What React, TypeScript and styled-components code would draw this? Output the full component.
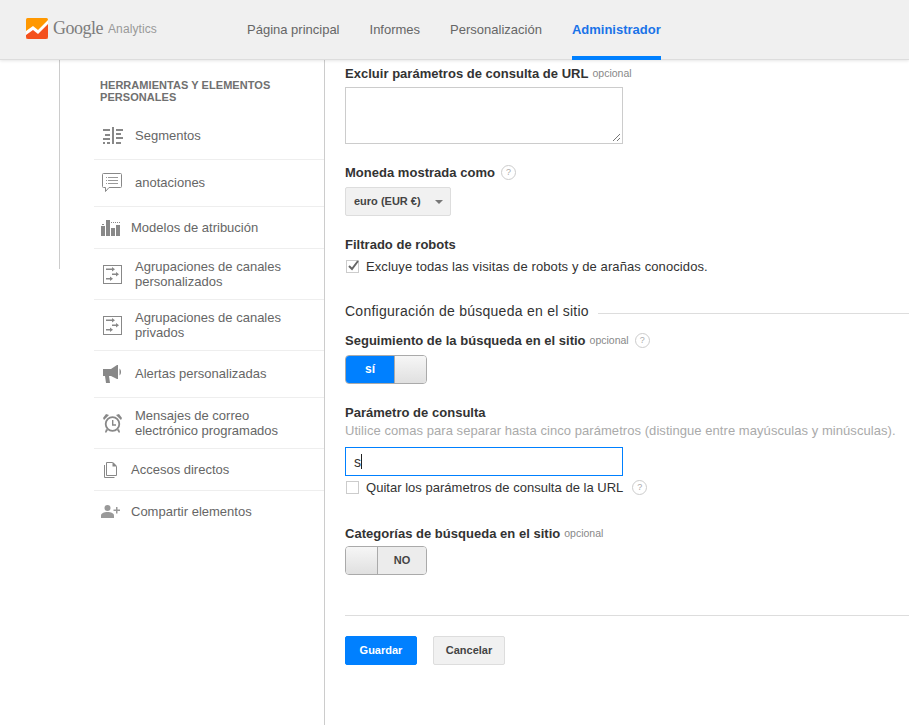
import React from 'react'
import styled, { createGlobalStyle } from 'styled-components'

const GlobalStyle = createGlobalStyle`
  html, body {
    margin: 0;
    padding: 0;
    background: #fff;
    overflow: hidden;
  }
  body {
    font-family: 'Liberation Sans', Arial, sans-serif;
    color: #333;
  }
`

const ICON_COLOR = '#888'

const SegmentsIcon = () => (
  <svg width="21" height="17" viewBox="0 0 21 17">
    <path d="M9 0h2v17H9z" fill={ICON_COLOR} />
    <path d="M0 2h7v2H0zM2 7h5v2H2zM0 11h7v2H0zM0 15h2v2H0zM4 15h3v2H4zM13 2h7v2h-7zM13 6h5v2h-5zM13 10h7v2h-7zM13 15h5v2h-5z" fill={ICON_COLOR} />
  </svg>
)

const NotesIcon = () => (
  <svg width="20" height="20" viewBox="0 0 20 20">
    <path d="M1.500.5h17a1 1 0 0 1 1 1v12a1 1 0 0 1-1 1H7l-3.500 4v-4h-2a1 1 0 0 1-1-1v-12a1 1 0 0 1 1-1z" fill="none" stroke={ICON_COLOR} />
    <path d="M4 4h1v1H4zM6 4h10v1H6zM4 7h1v1H4zM6 7h10v1H6zM4 10h1v1H4zM6 10h10v1H6z" fill="#999" />
  </svg>
)

const BarsIcon = () => (
  <svg width="19" height="16" viewBox="0 0 19 16">
    <path d="M0 6h4v10H0zM5 0h4v16H5zM10 8h4v8h-4zM15 5h4v11h-4z" fill={ICON_COLOR} />
    <path d="M1 4h2v1H1zM10 2h1v1h-1zM12 2h1v1h-1zM14 2h1v1h-1zM16 2h1v1h-1zM18 2h1v1h-1z" fill={ICON_COLOR} />
  </svg>
)

const ChannelsIcon = () => (
  <svg width="19" height="19" viewBox="0 0 19 19">
    <rect x=".5" y=".5" width="18" height="18" fill="none" stroke={ICON_COLOR} />
    <path d="M3 3.500h6V5H3zM9 2l3 2.250L9 6.500zM9 8.500h4V10H9zM13 7l3 2.250-3 2.250zM3 13h4v1.500H3zM7 11.500l3 2.250L7 16z" fill={ICON_COLOR} />
  </svg>
)

const MegaphoneIcon = () => (
  <svg width="19" height="18" viewBox="0 0 19 18">
    <path d="M0 4h8l6-4h1v14h-1l-6-3H6l1 7H3l-1-7H0z" fill={ICON_COLOR} />
    <path d="M16.500 3.500c2 1.500 2 5.500 0 7z" fill={ICON_COLOR} />
  </svg>
)

const ClockIcon = () => (
  <svg width="19" height="19" viewBox="0 0 19 19">
    <circle cx="9.500" cy="10" r="6.800" fill="none" stroke={ICON_COLOR} strokeWidth="1.800" />
    <path d="M9 6h1.400v4.300H13v1.400H9z" fill={ICON_COLOR} />
    <path d="M0 4l3-4 3 1-5 5zM19 4l-3-4-3 1 5 5zM3 15l2 1-2 3-1-1zM16 15l-2 1 2 3 1-1z" fill={ICON_COLOR} />
  </svg>
)

const PagesIcon = () => (
  <svg width="13" height="16" viewBox="0 0 13 16">
    <path d="M2.500.5h6l4 4v9h-10z" fill="none" stroke={ICON_COLOR} />
    <path d="M8.500.5h1l3 3v1h-4z" fill={ICON_COLOR} />
    <path d="M.5 3v12.500h10" fill="none" stroke={ICON_COLOR} />
  </svg>
)

const ShareIcon = () => (
  <svg width="19" height="13" viewBox="0 0 19 13">
    <circle cx="6.500" cy="3" r="3" fill="#999" />
    <path d="M0 13v-2.500C0 8.500 3 7 6.500 7S13 8.500 13 10.500V13z" fill="#999" />
    <path d="M15 2h1.500v2.500H19V6h-2.500v2.500H15V6h-2.500V4.500H15z" fill="#999" />
  </svg>
)

const LogoIcon = () => (
  <svg width="22" height="21" viewBox="0 0 22 21">
    <rect width="22" height="21" rx="1.500" fill="#ff9800" />
    <path d="M0 13l7-5 5 4 10-10v17a2 2 0 0 1-2 2H2a2 2 0 0 1-2-2z" fill="#fff" />
    <path d="M0 17l7-5 5 4 10-10v13a2 2 0 0 1-2 2H2a2 2 0 0 1-2-2z" fill="#f4511e" />
  </svg>
)

const Page = styled.div`
  width: 909px;
  height: 725px;
  display: flex;
  flex-direction: column;
  overflow: hidden;
  background: #fff;
`

const Header = styled.header`
  height: 59px;
  flex: none;
  display: flex;
  background: #f0f0f0;
  border-bottom: 1px solid #ddd;
  box-shadow: 0 1px 3px rgba(0, 0, 0, 0.1);
  position: relative;
  z-index: 1;
`

const Logo = styled.div`
  width: 247px;
  flex: none;
  display: flex;
  align-items: center;
  padding: 0 0 2px 26px;
  box-sizing: border-box;
`

const LogoGoogle = styled.span`
  margin-left: 5px;
  font-family: 'Liberation Serif', serif;
  font-size: 18px;
  letter-spacing: -0.5px;
  color: #7d7d7d;
`

const LogoProduct = styled.span`
  margin-left: 5px;
  font-size: 12px;
  letter-spacing: 0.1px;
  color: #999;
`

const Nav = styled.nav`
  display: flex;
  gap: 30px;
`

const NavItem = styled.a<{ $active?: boolean }>`
  height: 60px;
  box-sizing: border-box;
  padding-top: 21px;
  font-size: 13px;
  line-height: 18px;
  font-weight: ${(p) => (p.$active ? 'bold' : 'normal')};
  color: ${(p) => (p.$active ? '#1a73e8' : '#666')};
  border-bottom: 4px solid ${(p) => (p.$active ? '#0080ff' : 'transparent')};
`

const Body = styled.div`
  flex: 1;
  display: flex;
  min-height: 0;
`

const Rail = styled.div`
  width: 60px;
  height: 209px;
  flex: none;
  box-sizing: border-box;
  border-right: 1px solid #ccc;
`

const Sidebar = styled.aside`
  width: 265px;
  flex: none;
  box-sizing: border-box;
  padding: 19px 0 0 34px;
  border-right: 1px solid #ccc;
`

const SidebarTitle = styled.h3`
  margin: 0 0 9px 6px;
  font-size: 11px;
  line-height: 12px;
  font-weight: bold;
  letter-spacing: 0.05px;
  color: #707070;
  text-transform: uppercase;
`

const SideItem = styled.a<{ $height: number; $last?: boolean }>`
  height: ${(p) => p.$height}px;
  box-sizing: border-box;
  /* odd rows would round their text a pixel low */
  padding-bottom: ${(p) => (p.$height === 47 ? 1 : 0)}px;
  display: flex;
  align-items: center;
  border-bottom: 1px solid ${(p) => (p.$last ? 'transparent' : '#eee')};
  font-size: 13px;
  line-height: 15px;
  color: #666;
`

const SideIconSlot = styled.span<{ $width: number; $inset: number }>`
  width: ${(p) => p.$width}px;
  flex: none;
  display: flex;
  padding-left: ${(p) => p.$inset}px;
  box-sizing: border-box;
`

const Main = styled.main`
  flex: 1;
  min-width: 0;
  padding: 6px 0 0 20px;
`

const Field = styled.div<{ $mb: number }>`
  margin-bottom: ${(p) => p.$mb}px;
`

const Label = styled.div`
  display: flex;
  align-items: center;
  font-size: 13px;
  line-height: 15px;
  font-weight: bold;
  letter-spacing: 0.02px;
  color: #333;
`

const Optional = styled.span`
  margin-left: 4px;
  font-size: 10.500px;
  font-weight: normal;
  letter-spacing: 0;
  color: #888;
`

const Help = styled.span<{ $ml?: number }>`
  width: 13px;
  height: 13px;
  margin-left: ${(p) => p.$ml ?? 6}px;
  flex: none;
  display: inline-flex;
  align-items: center;
  justify-content: center;
  border: 1px solid #ccc;
  border-radius: 50%;
  font-size: 9px;
  font-weight: normal;
  color: #aaa;
`

const TextArea = styled.div`
  width: 278px;
  height: 57px;
  margin-top: 6px;
  box-sizing: border-box;
  border: 1px solid #ccc;
  position: relative;
`

const Grip = styled.svg`
  position: absolute;
  right: 1px;
  bottom: 1px;
`

const Select = styled.div`
  width: 106px;
  height: 29px;
  margin-top: 7px;
  box-sizing: border-box;
  padding: 0 0 2px 8px;
  display: flex;
  align-items: center;
  border: 1px solid #ddd;
  border-radius: 2px;
  background: #f1f1f1;
  font-size: 11px;
  font-weight: bold;
  color: #444;
`

const Caret = styled.span`
  margin: 3px 0 0 14px;
  border-style: solid;
  border-width: 4px 4px 0;
  border-color: #777 transparent transparent;
`

const CheckRow = styled.div<{ $mt: number; $spacing: number }>`
  margin-top: ${(p) => p.$mt}px;
  display: flex;
  align-items: center;
  font-size: 13px;
  line-height: 15px;
  letter-spacing: ${(p) => p.$spacing}px;
  color: #333;
`

const CheckBox = styled.span`
  width: 13px;
  height: 13px;
  margin: 0 7px 0 1px;
  flex: none;
  box-sizing: border-box;
  border: 1px solid #ccc;
  position: relative;
`

const CheckMark = styled.svg`
  position: absolute;
  left: -1px;
  top: -3px;
`

const SectionHead = styled.div`
  display: flex;
  align-items: center;
  gap: 9px;
  margin-bottom: 13px;
  font-size: 14px;
  line-height: 18px;
  letter-spacing: 0.26px;
  color: #333;
  &::after {
    content: '';
    flex: 1;
    height: 1px;
    margin-top: 4px;
    background: #ddd;
  }
`

const Toggle = styled.div<{ $mt: number }>`
  width: 82px;
  height: 29px;
  margin-top: ${(p) => p.$mt}px;
  display: flex;
  box-sizing: border-box;
  border: 1px solid #aaa;
  border-radius: 4px;
  overflow: hidden;
  font-size: 12px;
  font-weight: bold;
`

const ToggleOn = styled.span`
  width: 50px;
  padding-bottom: 2px;
  box-sizing: border-box;
  display: flex;
  align-items: center;
  justify-content: center;
  background: #0080ff;
  color: #fff;
`

const ToggleOff = styled.span`
  flex: 1;
  padding-bottom: 2px;
  display: flex;
  align-items: center;
  justify-content: center;
  background: #ececec;
  font-size: 11px;
  color: #444;
`

const ToggleKnob = styled.span<{ $side: 'left' | 'right' }>`
  width: 32px;
  flex: none;
  box-sizing: border-box;
  background: linear-gradient(#f6f6f6, #e0e0e0);
  border-${(p) => (p.$side === 'left' ? 'right' : 'left')}: 1px solid #aaa;
`

const Hint = styled.div`
  margin-top: 3px;
  font-size: 13px;
  line-height: 15px;
  letter-spacing: 0.055px;
  color: #aaa;
  white-space: nowrap;
`

const Input = styled.div`
  width: 278px;
  height: 29px;
  margin-top: 9px;
  box-sizing: border-box;
  padding-left: 8px;
  display: flex;
  align-items: center;
  border: 1px solid #0080ff;
  font-size: 14px;
  color: #333;
`

const Cursor = styled.span`
  width: 1px;
  height: 15px;
  background: #222;
`

const Divider = styled.hr`
  margin: 0 0 20px;
  border: 0;
  border-top: 1px solid #ddd;
`

const Actions = styled.div`
  display: flex;
  gap: 16px;
`

const Button = styled.button<{ $primary?: boolean }>`
  width: 72px;
  height: 29px;
  padding: 0 0 2px;
  box-sizing: border-box;
  border: 1px solid ${(p) => (p.$primary ? '#0080ff' : '#ddd')};
  border-radius: 2px;
  background: ${(p) => (p.$primary ? '#0080ff' : '#f1f1f1')};
  color: ${(p) => (p.$primary ? '#fff' : '#444')};
  font-family: 'Liberation Sans', Arial, sans-serif;
  font-size: 11px;
  font-weight: bold;
`

const sideItems = [
  { label: ['Segmentos'], icon: <SegmentsIcon />, slot: 41, inset: 9, height: 48 },
  { label: ['anotaciones'], icon: <NotesIcon />, slot: 41, inset: 8, height: 47 },
  { label: ['Modelos de atribución'], icon: <BarsIcon />, slot: 37, inset: 7, height: 42 },
  { label: ['Agrupaciones de canales', 'personalizados'], icon: <ChannelsIcon />, slot: 41, inset: 9, height: 51 },
  { label: ['Agrupaciones de canales', 'privados'], icon: <ChannelsIcon />, slot: 41, inset: 9, height: 51 },
  { label: ['Alertas personalizadas'], icon: <MegaphoneIcon />, slot: 41, inset: 9, height: 47 },
  { label: ['Mensajes de correo', 'electrónico programados'], icon: <ClockIcon />, slot: 41, inset: 9, height: 51 },
  { label: ['Accesos directos'], icon: <PagesIcon />, slot: 37, inset: 10, height: 42 },
  { label: ['Compartir elementos'], icon: <ShareIcon />, slot: 37, inset: 7, height: 42 },
]

const navItems = ['Página principal', 'Informes', 'Personalización', 'Administrador']

const App = () => {
  return (
    <Page>
      <GlobalStyle />
      <Header>
        <Logo>
          <LogoIcon />
          <LogoGoogle>Google</LogoGoogle>
          <LogoProduct>Analytics</LogoProduct>
        </Logo>
        <Nav>
          {navItems.map((item) => (
            <NavItem key={item} $active={item === 'Administrador'}>
              {item}
            </NavItem>
          ))}
        </Nav>
      </Header>
      <Body>
        <Rail />
        <Sidebar>
          <SidebarTitle>Herramientas y elementos personales</SidebarTitle>
          {sideItems.map((item, i) => (
            <SideItem key={i} $height={item.height} $last={i === sideItems.length - 1}>
              <SideIconSlot $width={item.slot} $inset={item.inset}>
                {item.icon}
              </SideIconSlot>
              <span>
                {item.label.map((line) => (
                  <div key={line}>{line}</div>
                ))}
              </span>
            </SideItem>
          ))}
        </Sidebar>
        <Main>
          <Field $mb={21}>
            <Label>
              Excluir parámetros de consulta de URL<Optional>opcional</Optional>
            </Label>
            <TextArea>
              <Grip width="9" height="9" viewBox="0 0 9 9">
                <path d="M1 8l7-7M5 8l3-3" stroke="#777" fill="none" />
              </Grip>
            </TextArea>
          </Field>
          <Field $mb={21}>
            <Label>
              Moneda mostrada como<Help>?</Help>
            </Label>
            <Select>
              euro (EUR €)<Caret />
            </Select>
          </Field>
          <Field $mb={28}>
            <Label>Filtrado de robots</Label>
            <CheckRow $mt={7} $spacing={0.1}>
              <CheckBox>
                <CheckMark width="15" height="15" viewBox="0 0 15 15">
                  <path d="M3 8l3 3 6-8" stroke="#666" strokeWidth="2" fill="none" />
                </CheckMark>
              </CheckBox>
              Excluye todas las visitas de robots y de arañas conocidos.
            </CheckRow>
          </Field>
          <SectionHead>Configuración de búsqueda en el sitio</SectionHead>
          <Field $mb={21}>
            <Label>
              Seguimiento de la búsqueda en el sitio<Optional>opcional</Optional>
              <Help>?</Help>
            </Label>
            <Toggle $mt={7}>
              <ToggleOn>sí</ToggleOn>
              <ToggleKnob $side="right" />
            </Toggle>
          </Field>
          <Field $mb={31}>
            <Label>Parámetro de consulta</Label>
            <Hint>Utilice comas para separar hasta cinco parámetros (distingue entre mayúsculas y minúsculas).</Hint>
            <Input>
              s<Cursor />
            </Input>
            <CheckRow $mt={4} $spacing={0.02}>
              <CheckBox />
              Quitar los parámetros de consulta de la URL<Help $ml={9}>?</Help>
            </CheckRow>
          </Field>
          <Field $mb={40}>
            <Label>
              Categorías de búsqueda en el sitio<Optional>opcional</Optional>
            </Label>
            <Toggle $mt={5}>
              <ToggleKnob $side="left" />
              <ToggleOff>NO</ToggleOff>
            </Toggle>
          </Field>
          <Divider />
          <Actions>
            <Button $primary>Guardar</Button>
            <Button>Cancelar</Button>
          </Actions>
        </Main>
      </Body>
    </Page>
  )
}

export default App
